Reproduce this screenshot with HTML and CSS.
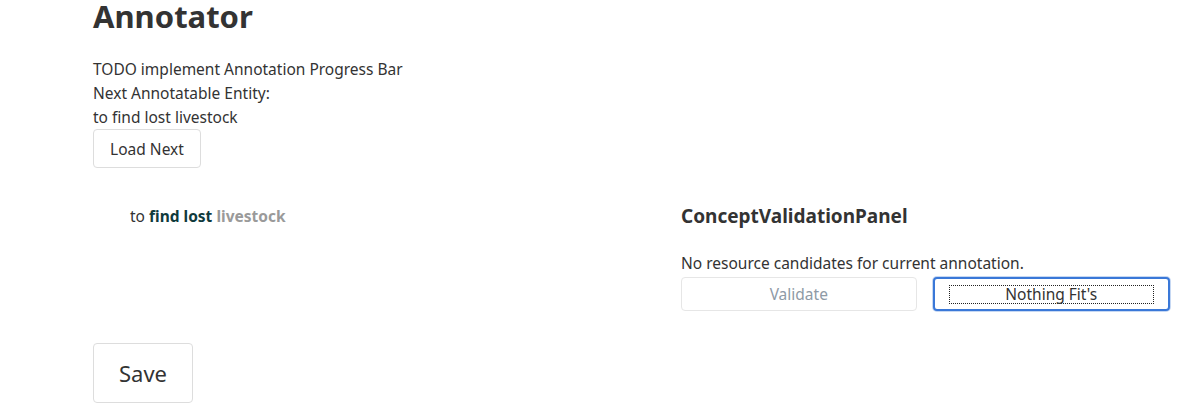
FILE: index.html
```html
<!DOCTYPE html>
<html>
<head>
<meta charset="utf-8">
<link rel="stylesheet" href="styles.css">
</head>
<body>
<div class="page">
  <h1 class="title">Annotator</h1>
  <div class="info">
    <div>TODO implement Annotation Progress Bar</div>
    <div>Next Annotatable Entity:</div>
    <div>to find lost livestock</div>
  </div>
  <button class="btn btn-load">Load Next</button>
  <div class="row">
    <div class="col-left">
      <div class="sentence">to <span class="hl">find lost</span> <span class="muted">livestock</span></div>
    </div>
    <div class="col-right">
      <h2 class="panel-title">ConceptValidationPanel</h2>
      <div class="panel-msg">No resource candidates for current annotation.</div>
      <div class="actions">
        <button class="btn btn-wide btn-disabled">Validate</button>
        <button class="btn btn-wide btn-focus"><span class="focus-ring">Nothing Fit's</span></button>
      </div>
    </div>
  </div>
  <button class="btn btn-save">Save</button>
</div>
</body>
</html>
```
FILE: styles.css
```css
html, body {
  margin: 0;
  padding: 0;
  background: #fff;
}
body {
  font-family: "Noto Sans", "Open Sans", sans-serif;
  color: #333;
  font-size: 15.5px;
  line-height: 24px;
}
.page {
  padding: 0 32px 0 93px;
}
.title {
  margin: 0;
  font-size: 31px;
  line-height: 34px;
  font-weight: 700;
  color: #333;
  margin-top: -1px;
}
.info {
  margin-top: 24px;
}
.btn {
  font-family: inherit;
  color: #333;
  background: #fff;
  border: 1px solid #ddd;
  border-radius: 4px;
  cursor: pointer;
}
.btn-load {
  display: block;
  width: 108px;
  height: 39px;
  font-size: 15.5px;
  margin-top: 0;
  padding: 0;
}
.row {
  display: flex;
  margin-top: 36px;
}
.col-left {
  width: 588px;
  padding-left: 37px;
  box-sizing: border-box;
}
.sentence {
  font-size: 15.5px;
  line-height: 24px;
}
.hl {
  font-weight: 700;
  color: #0f3a3c;
}
.muted {
  font-weight: 700;
  color: #9a9a9a;
}
.col-right {
  width: 489px;
}
.panel-title {
  margin: 0;
  font-size: 19px;
  line-height: 24px;
  font-weight: 700;
}
.panel-msg {
  margin-top: 23px;
}
.actions {
  display: flex;
  gap: 16px;
  margin-top: 2px;
}
.btn-wide {
  flex: 1;
  height: 34px;
  font-size: 15.5px;
  padding: 0;
}
.btn-disabled {
  color: #8e9aa6;
  border-color: #e6e6e6;
}
.btn-focus {
  border: 2px solid #3a78d8;
  box-shadow: 0 0 0 1px #c6d8f3;
  outline: none;
}
.focus-ring {
  display: block;
  margin: 0 14px;
  border: 1px dotted #222;
  line-height: 17px;
  color: #333;
}
.btn-save {
  display: block;
  width: 100px;
  height: 60px;
  font-size: 22px;
  margin-top: 32px;
  padding: 0;
}
```
